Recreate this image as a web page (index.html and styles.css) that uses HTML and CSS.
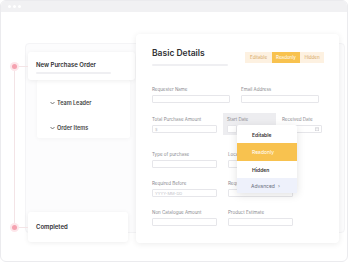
FILE: index.html
```html
<!DOCTYPE html>
<html lang="en">
<head>
    <meta charset="UTF-8">
    <meta name="viewport" content="width=device-width, initial-scale=1.0">
    <title>Purchase Order Flow</title>

    <link rel="stylesheet" href="styles.css">
</head>
<body>
    <div class="window">
        <div class="topbar">
            <span class="dot"></span>
            <span class="dot"></span>
            <span class="dot"></span>
        </div>

        <div class="content">
            <div class="backdrop"></div>

            <div class="left">
                <div class="steps">
                    <div class="step-card first">
                        <h3>New Purchase Order</h3>
                        <div class="bar"></div>
                    </div>

                    <div class="sub-card">
                        <div class="sub-item">
                            <svg class="chev" width="5" height="4" viewBox="0 0 10 8"><path d="M1 2 L5 6 L9 2" fill="none" stroke="#555" stroke-width="1.6"/></svg>
                            Team Leader
                        </div>
                        <div class="sub-item">
                            <svg class="chev" width="5" height="4" viewBox="0 0 10 8"><path d="M1 2 L5 6 L9 2" fill="none" stroke="#555" stroke-width="1.6"/></svg>
                            Order Items
                        </div>
                    </div>

                    <div class="step-card last">
                        <h3>Completed</h3>
                    </div>
                </div>
            </div>

            <div class="main-card">
                <div class="card-head">
                    <div>
                        <h2>Basic Details</h2>
                        <div class="bar wide"></div>
                    </div>
                    <div class="toggle">
                        <span>Editable</span>
                        <span class="active">Readonly</span>
                        <span>Hidden</span>
                    </div>
                </div>

                <div class="rows">
                    <div class="row row-1">
                        <div class="field w78">
                            <label>Requester Name</label>
                            <div class="input"></div>
                        </div>
                        <div class="field w78">
                            <label>Email Address</label>
                            <div class="input"></div>
                        </div>
                    </div>

                    <div class="row row-2">
                        <div class="field w65">
                            <label>Total Purchase Amount</label>
                            <div class="input"><span class="ph">$</span></div>
                        </div>
                        <div class="field picked">
                            <label>Start Date</label>
                            <div class="input tiny"></div>

                            <div class="menu">
                                <div class="menu-item">Editable</div>
                                <div class="menu-item on">Readonly</div>
                                <div class="menu-item">Hidden</div>
                                <div class="menu-item more">Advanced <span>&#8250;</span></div>
                            </div>
                        </div>
                        <div class="field w40">
                            <label>Received Date</label>
                            <div class="input date">
                                <svg width="4" height="4" viewBox="0 0 8 8">
                                    <rect x="0.5" y="1.5" width="7" height="6" fill="none" stroke="#c9c9cf"/>
                                    <line x1="0.5" y1="3.5" x2="7.5" y2="3.5" stroke="#c9c9cf"/>
                                </svg>
                            </div>
                        </div>
                    </div>

                    <div class="row">
                        <div class="field w65">
                            <label>Type of purchase</label>
                            <div class="input"></div>
                        </div>
                        <div class="field w65">
                            <label>Location</label>
                            <div class="input"></div>
                        </div>
                    </div>

                    <div class="row">
                        <div class="field w65">
                            <label>Required Before</label>
                            <div class="input"><span class="ph">YYYY-MM-DD</span></div>
                        </div>
                        <div class="field w65">
                            <label>Requested By</label>
                            <div class="input"></div>
                        </div>
                    </div>

                    <div class="row">
                        <div class="field w65">
                            <label>Non Catalogue Amount</label>
                            <div class="input"></div>
                        </div>
                        <div class="field w65">
                            <label>Product Estimate</label>
                            <div class="input"></div>
                        </div>
                    </div>
                </div>
            </div>
        </div>
    </div>
</body>
</html>
```

FILE: styles.css
```css
*{
    margin: 0;
    padding: 0;
    box-sizing: border-box;
}

body{
    background-color: #fff;
    font-family: Inter, "Open Sans", sans-serif;
    color: #333;
}

.window{
    width: 348px;
    height: 262px;
    border: 1px solid #ebebee;
    border-radius: 6px;
    overflow: hidden;
    background-color: #fff;
}

.topbar{
    height: 11px;
    background-color: #f1f1f3;
    display: flex;
    align-items: center;
    gap: 2px;
    padding-left: 7px;
}

.topbar .dot{
    width: 3px;
    height: 3px;
    border-radius: 50%;
    background-color: #fff;
}

.content{
    position: relative;
    display: flex;
    align-items: flex-start;
}

.backdrop{
    position: absolute;
    left: 24px;
    top: 31px;
    right: 2px;
    bottom: 10px;
    border: 1px solid #f4f4f6;
    border-radius: 4px;
    background-color: #fcfcfd;
}

.left{
    position: relative;
    width: 135px;
    padding-top: 40px;
}

.steps{
    position: relative;
    margin-left: 13px;
    padding-left: 14px;
}

/* timeline line */
.steps::before{
    content: "";
    position: absolute;
    left: 0;
    top: 15px;
    bottom: 14px;
    border-left: 1px solid #f3e4e6;
}

.step-card{
    position: relative;
    background-color: #fff;
    border-radius: 3px;
    box-shadow: 0 1px 5px rgba(0, 0, 0, 0.07);
    padding: 0 8px;
}

.step-card::before{
    content: "";
    position: absolute;
    left: -14px;
    top: 50%;
    width: 14px;
    border-top: 1px solid #f3e4e6;
}

.step-card::after{
    content: "";
    position: absolute;
    left: -16px;
    top: 50%;
    width: 5px;
    height: 5px;
    margin-top: -2px;
    border-radius: 50%;
    background-color: #f5a2b0;
    box-shadow: 0 0 0 2px #fde6ea;
}

.step-card h3{
    font-size: 6px;
    font-weight: 600;
    color: #2f2f33;
}

.step-card.first{
    width: 107px;
    height: 28px;
    padding-top: 9px;
}

.step-card.last{
    width: 100px;
    height: 30px;
    margin-top: 74px;
    padding-top: 11px;
}

.bar{
    width: 75px;
    height: 2px;
    margin-top: 4px;
    background-color: #efeff2;
    border-radius: 1px;
}

.bar.wide{
    width: 76px;
    margin-top: 5px;
}

.sub-card{
    width: 93px;
    height: 58px;
    margin-left: 9px;
    background-color: #fff;
    border-radius: 2px;
    box-shadow: 0 1px 4px rgba(0, 0, 0, 0.04);
    padding: 20px 0 0 13px;
}

.sub-item{
    display: flex;
    align-items: flex-start;
    gap: 2px;
    font-size: 5.5px;
    font-weight: 600;
    color: #444;
    height: 25px;
}

.chev{
    display: block;
    margin-top: 1px;
}

.main-card{
    position: relative;
    width: 203px;
    height: 209px;
    margin-top: 22px;
    background-color: #fff;
    border-radius: 4px;
    box-shadow: 0 1px 6px rgba(0, 0, 0, 0.08);
    padding: 13px 15px 0 16px;
}

.card-head{
    display: flex;
    justify-content: space-between;
    align-items: flex-start;
}

.card-head h2{
    font-size: 8.5px;
    font-weight: 600;
    color: #2f2f33;
    line-height: 12px;
}

.toggle{
    display: flex;
    margin-top: 5px;
    height: 11px;
    font-size: 4.5px;
}

.toggle span{
    display: flex;
    align-items: center;
    justify-content: center;
    background-color: #fdf1e1;
    color: #d5a766;
    width: 27px;
}

.toggle span:last-child{
    width: 24px;
}

.toggle .active{
    background-color: #f8c24f;
    color: #fff;
    width: 28px;
}

.rows{
    display: flex;
    flex-direction: column;
    gap: 13px;
    margin-top: 21px;
}

.row{
    display: flex;
    gap: 11px;
}

.row-1{
    margin-bottom: 1px;
}

.row-2{
    gap: 6px;
    margin-bottom: 4px;
}

.field{
    display: flex;
    flex-direction: column;
}

.field label{
    font-size: 4.5px;
    line-height: 6px;
    color: #8b8b90;
    margin-bottom: 2px;
}

.input{
    height: 8px;
    border: 1px solid #e6e6ea;
    border-radius: 1px;
    background-color: #fff;
    display: flex;
    align-items: center;
    padding-left: 2px;
}

.ph{
    font-size: 4px;
    color: #c4c4c9;
}

.w78{
    width: 78px;
}

.w65{
    width: 65px;
}

.w40{
    width: 40px;
}

.date{
    justify-content: flex-end;
    padding-right: 2px;
}

.date svg{
    display: block;
}

.picked{
    position: relative;
    width: 53px;
    height: 22px;
    margin-top: -4px;
    padding: 4px 0 0 4px;
    background-color: #ededf0;
}

.picked .tiny{
    width: 10px;
}

/* dropdown that floats over the form */
.menu{
    position: absolute;
    left: 14px;
    top: 12px;
    width: 60px;
    background-color: #fff;
    box-shadow: 0 2px 8px rgba(0, 0, 0, 0.12);
    border-radius: 2px;
    padding-top: 1px;
    z-index: 2;
}

.menu-item{
    height: 17px;
    display: flex;
    align-items: center;
    padding-left: 15px;
    font-size: 5px;
    font-weight: 600;
    color: #333;
}

.menu-item.on{
    height: 18px;
    background-color: #f8c24f;
    color: #fff;
    font-weight: 400;
}

.menu-item.more{
    height: 15px;
    background-color: #eef1fb;
    color: #6c7080;
    font-weight: 400;
    padding-left: 14px;
}

.menu-item.more span{
    margin-left: 3px;
}
```
